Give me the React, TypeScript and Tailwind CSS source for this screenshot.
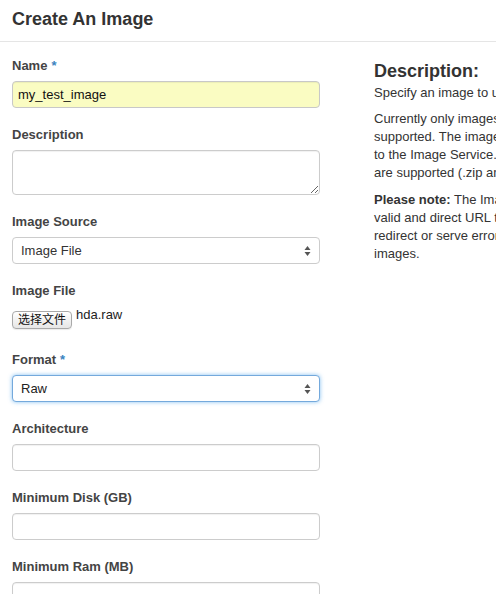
import React from "react";

const font = { fontFamily: '"Liberation Sans", Arial, "Noto Sans CJK SC", sans-serif' };

function Label({ text, required }: { text: string; required?: boolean }) {
    return (
        <label className="mb-[6px] block text-[13px] font-bold leading-[18px] text-[#444]">
            {text}
            {required && <span className="ml-[4px] text-[#3b83c0]">*</span>}
        </label>
    );
}

function Arrows() {
    return (
        <svg width="7" height="11" viewBox="0 0 7 11" className="pointer-events-none absolute right-[9px] top-1/2 -translate-y-1/2">
            <path d="M3.5 0.5 L6.5 4.5 H0.5 Z" fill="#555" />
            <path d="M3.5 10.5 L6.5 6.5 H0.5 Z" fill="#555" />
        </svg>
    );
}

function Select({ value, focused }: { value: string; focused?: boolean }) {
    return (
        <div className="relative mb-[18px]">
            <select
                defaultValue={value}
                className={
                    focused
                        ? "block h-[27px] w-full appearance-none rounded-[4px] border border-[#74a9dc] bg-white pl-[8px] text-[13px] text-[#222] shadow-[0_0_4px_rgba(82,168,236,0.7)] outline-none"
                        : "block h-[27px] w-full appearance-none rounded-[4px] border border-[#cccccc] bg-white pl-[8px] text-[13px] text-[#333] outline-none"
                }
            >
                <option>{value}</option>
            </select>
            <Arrows />
        </div>
    );
}

function TextInput({ value, yellow }: { value?: string; yellow?: boolean }) {
    return (
        <input
            defaultValue={value}
            className={
                yellow
                    ? "mb-[18px] block h-[27px] w-full rounded-[4px] border border-[#c8c8c8] bg-[#fafcc2] px-[5px] text-[13px] text-[#111] shadow-[inset_0_1px_1px_rgba(0,0,0,0.06)] outline-none"
                    : "mb-[18px] block h-[27px] w-full rounded-[4px] border border-[#cccccc] bg-white px-[5px] text-[13px] text-[#333] shadow-[inset_0_1px_1px_rgba(0,0,0,0.06)] outline-none"
            }
        />
    );
}

export default function App() {
    return (
        <div className="h-[594px] w-[496px] overflow-hidden bg-white text-[13px] text-[#333]" style={font}>
            {/* Header */}
            <div className="flex h-[42px] items-center border-b border-[#e5e5e5] px-[12px] pb-[4px]">
                <h3 className="text-[18px] font-bold leading-none text-[#333]">Create An Image</h3>
            </div>

            <div className="flex gap-[54px] px-[12px] pt-[15px]">
                {/* Form */}
                <div className="w-[308px] shrink-0">
                    <Label text="Name" required />
                    <TextInput value="my_test_image" yellow />

                    <Label text="Description" />
                    <textarea className="mb-[18px] block h-[45px] w-full resize-y rounded-[4px] border border-[#cccccc] bg-white px-[5px] text-[13px] shadow-[inset_0_1px_1px_rgba(0,0,0,0.06)] outline-none" />

                    <Label text="Image Source" />
                    <Select value="Image File" />

                    <Label text="Image File" />
                    <div className="mb-[18px] flex h-[27px] items-start gap-[4px]">
                        <button className="mt-[5px] h-[18px] w-[60px] rounded-[4px] border border-[#a9a9a9] bg-gradient-to-b from-white to-[#e6e6e6] text-[12px] leading-none text-[#111] shadow-[0_1px_1px_rgba(0,0,0,0.08)]">
                            选择文件
                        </button>
                        <span className="text-[13px] leading-[18px] text-[#222]">hda.raw</span>
                    </div>

                    <Label text="Format" required />
                    <Select value="Raw" focused />

                    <Label text="Architecture" />
                    <TextInput />

                    <Label text="Minimum Disk (GB)" />
                    <TextInput />

                    <Label text="Minimum Ram (MB)" />
                    <TextInput />
                </div>

                {/* Help text */}
                <div className="w-[330px] shrink-0 whitespace-nowrap pt-[4px] text-[13px] leading-[18px] text-[#333]">
                    <h3 className="mb-[3px] text-[18px] font-bold leading-[20px]">Description:</h3>
                    <p className="mb-[8px]">Specify an image to upload to the Image Service.</p>
                    <p className="mb-[9px]">
                        <span className="block">Currently only images available via an HTTP URL are</span>
                        <span className="block">supported. The image location must be accessible</span>
                        <span className="block">to the Image Service. Compressed image binaries</span>
                        <span className="block">are supported (.zip and .tar.gz.)</span>
                    </p>
                    <p>
                        <span className="block">
                            <strong>Please note:</strong> The Image Location field MUST be a
                        </span>
                        <span className="block">valid and direct URL to the image binary. URLs that</span>
                        <span className="block">redirect or serve error pages will result in unusable</span>
                        <span className="block">images.</span>
                    </p>
                </div>
            </div>
        </div>
    );
}
